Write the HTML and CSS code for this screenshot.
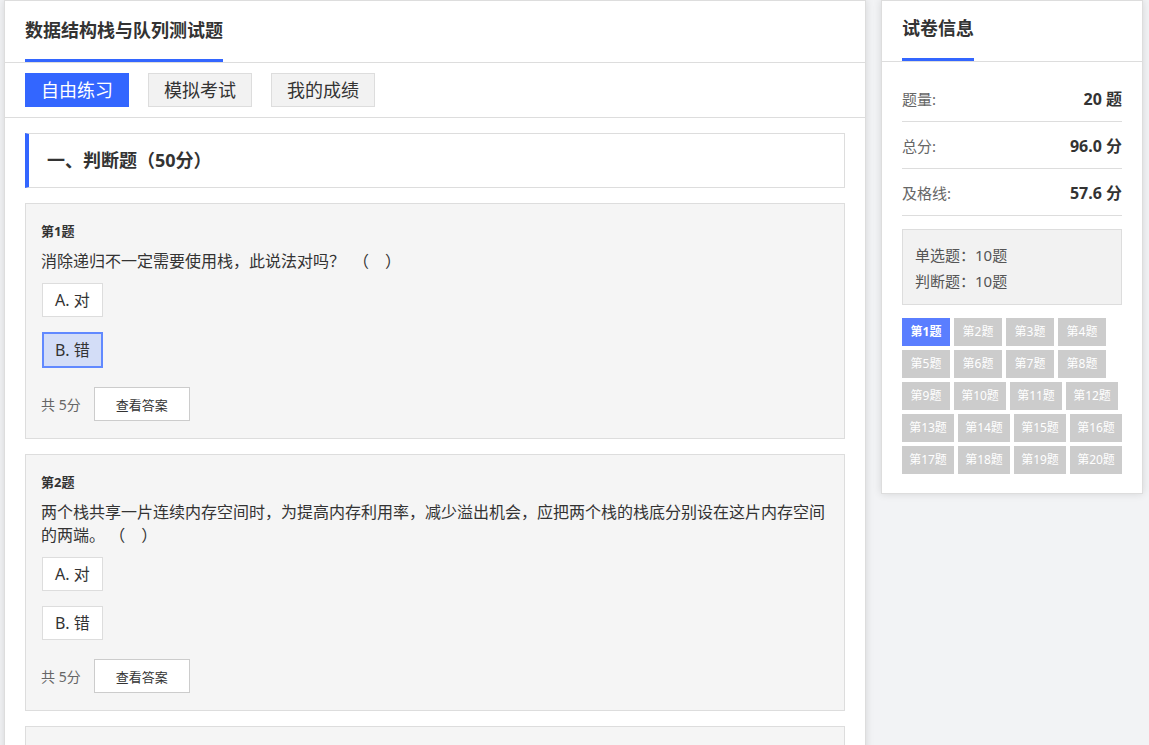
FILE: index.html
```html
<!DOCTYPE html>
<html lang="zh-CN">
<head>
  <meta charset="UTF-8">
  <title>数据结构栈与队列测试题</title>
  <link rel="stylesheet" href="styles.css">
</head>
<body>
  <div class="page">
    <div class="main">
      <div class="main-head">
        <h2 class="title">数据结构栈与队列测试题</h2>
      </div>
      <div class="tabs">
        <span class="tab active">自由练习</span>
        <span class="tab">模拟考试</span>
        <span class="tab">我的成绩</span>
      </div>

      <div class="content">
        <div class="section-title">一、判断题（50分）</div>

        <div class="card">
          <div class="q-no">第1题</div>
          <div class="q-text">消除递归不一定需要使用栈，此说法对吗？　（　）</div>
          <div class="options">
            <span class="option">A. 对</span>
            <span class="option selected">B. 错</span>
          </div>
          <div class="q-foot">
            <span class="score">共 5分</span>
            <button class="btn-answer">查看答案</button>
          </div>
        </div>

        <div class="card">
          <div class="q-no">第2题</div>
          <div class="q-text">两个栈共享一片连续内存空间时，为提高内存利用率，减少溢出机会，应把两个栈的栈底分别设在这片内存空间的两端。 （　）</div>
          <div class="options">
            <span class="option">A. 对</span>
            <span class="option">B. 错</span>
          </div>
          <div class="q-foot">
            <span class="score">共 5分</span>
            <button class="btn-answer">查看答案</button>
          </div>
        </div>

        <div class="card">
          <div class="q-no">第3题</div>
          <div class="q-text">栈和队列都是限制存取点的线性结构。 （　）</div>
          <div class="options">
            <span class="option">A. 对</span>
            <span class="option">B. 错</span>
          </div>
          <div class="q-foot">
            <span class="score">共 5分</span>
            <button class="btn-answer">查看答案</button>
          </div>
        </div>
      </div>
    </div>

    <div class="side">
      <div class="side-head">
        <h3 class="side-title">试卷信息</h3>
      </div>
      <div class="side-body">
        <div class="info-row"><span class="label">题量:</span><span class="value">20 题</span></div>
        <div class="info-row"><span class="label">总分:</span><span class="value">96.0 分</span></div>
        <div class="info-row"><span class="label">及格线:</span><span class="value">57.6 分</span></div>

        <div class="type-box">
          <div>单选题：10题</div>
          <div>判断题：10题</div>
        </div>

        <div class="nums">
          <span class="num current">第1题</span>
          <span class="num">第2题</span>
          <span class="num">第3题</span>
          <span class="num">第4题</span>
          <span class="num">第5题</span>
          <span class="num">第6题</span>
          <span class="num">第7题</span>
          <span class="num">第8题</span>
          <span class="num">第9题</span>
          <span class="num wide">第10题</span>
          <span class="num wide">第11题</span>
          <span class="num wide">第12题</span>
          <span class="num wide">第13题</span>
          <span class="num wide">第14题</span>
          <span class="num wide">第15题</span>
          <span class="num wide">第16题</span>
          <span class="num wide">第17题</span>
          <span class="num wide">第18题</span>
          <span class="num wide">第19题</span>
          <span class="num wide">第20题</span>
        </div>
      </div>
    </div>
  </div>
</body>
</html>
```

FILE: styles.css
```css
* {
  box-sizing: border-box;
}

body {
  margin: 0;
  background: #f2f3f5;
  font-family: "Noto Sans", "Noto Sans CJK SC", sans-serif;
  color: #333;
}

.page {
  display: flex;
  align-items: flex-start;
  gap: 15px;
  padding-left: 4px;
}

/* main column */
.main {
  width: 862px;
  background: #fff;
  border: 1px solid #ddd;
  box-shadow: 0 0 8px rgba(0, 0, 0, 0.12);
}

.main-head {
  padding: 0 20px;
  border-bottom: 1px solid #ddd;
}

.title {
  display: inline-block;
  margin: 0;
  padding: 17px 0;
  font-size: 18px;
  line-height: 24px;
  font-weight: bold;
  color: #333;
  border-bottom: 3px solid #3366ff;
}

.tabs {
  display: flex;
  gap: 19px;
  padding: 10px 20px;
  border-bottom: 1px solid #ddd;
}

.tab {
  height: 34px;
  line-height: 32px;
  padding: 0 15px;
  font-size: 18px;
  color: #333;
  background: #f2f2f2;
  border: 1px solid #ddd;
}

.tab.active {
  background: #3366ff;
  border-color: #3366ff;
  color: #fff;
}

.content {
  padding: 15px 20px;
}

.section-title {
  height: 55px;
  line-height: 53px;
  padding-left: 18px;
  font-size: 18px;
  font-weight: bold;
  border: 1px solid #ddd;
  border-left: 4px solid #3366ff;
  margin-bottom: 15px;
}

/* question card */
.card {
  background: #f5f5f5;
  border: 1px solid #ddd;
  padding: 15px 15px 17px;
  margin-bottom: 15px;
}

.q-no {
  font-size: 13px;
  font-weight: bold;
  line-height: 24px;
}

.q-text {
  margin-top: 7px;
  font-size: 16px;
  line-height: 23px;
}

.options {
  display: flex;
  flex-direction: column;
  align-items: flex-start;
  gap: 15px;
  margin-top: 10px;
  padding-left: 1px;
}

.option {
  height: 34px;
  line-height: 32px;
  padding: 0 12px;
  font-size: 16px;
  background: #fff;
  border: 1px solid #ddd;
}

.option.selected {
  height: 36px;
  line-height: 32px;
  padding: 0 11px;
  background: #d3ddf7;
  border: 2px solid #6189ff;
}

.q-foot {
  display: flex;
  align-items: center;
  gap: 13px;
  margin-top: 19px;
}

.score {
  font-size: 14px;
  color: #666;
}

.btn-answer {
  width: 96px;
  height: 34px;
  padding: 0;
  font-family: inherit;
  font-size: 13px;
  color: #333;
  background: #fff;
  border: 1px solid #ccc;
}

/* side panel */
.side {
  width: 262px;
  background: #fff;
  border: 1px solid #ddd;
  box-shadow: 0 0 8px rgba(0, 0, 0, 0.12);
}

.side-head {
  padding: 0 20px;
  border-bottom: 1px solid #ddd;
}

.side-title {
  display: inline-block;
  margin: 0;
  padding: 15px 0 18px;
  font-size: 18px;
  line-height: 24px;
  font-weight: bold;
  color: #333;
  border-bottom: 3px solid #3366ff;
}

.side-body {
  padding: 13px 20px 19px;
}

.info-row {
  display: flex;
  justify-content: space-between;
  align-items: center;
  height: 47px;
  border-bottom: 1px solid #ddd;
}

.label {
  font-size: 15px;
  color: #666;
}

.value {
  font-size: 16px;
  font-weight: bold;
  color: #333;
}

.type-box {
  margin-top: 13px;
  padding: 12px 12px 10px;
  background: #f2f2f2;
  border: 1px solid #ddd;
  font-size: 15px;
  line-height: 26px;
  color: #555;
}

.nums {
  display: flex;
  flex-wrap: wrap;
  gap: 4px;
  margin-top: 13px;
}

.num {
  width: 48px;
  height: 28px;
  line-height: 28px;
  text-align: center;
  font-size: 12px;
  color: #fff;
  background: #ccc;
}

.num.wide {
  width: 52px;
}

.num.current {
  background: #5a7eff;
  font-weight: bold;
}
```
